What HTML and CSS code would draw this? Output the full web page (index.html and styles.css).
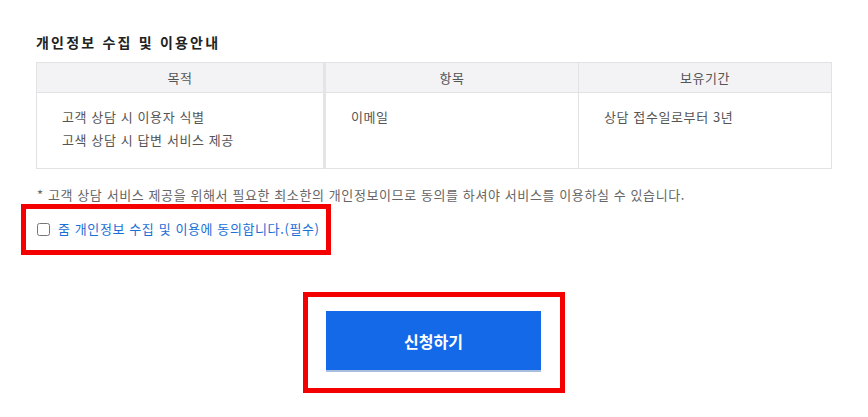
FILE: index.html
```html
<!DOCTYPE html>
<html lang="ko">
<head>
  <meta charset="UTF-8">
  <meta name="viewport" content="width=device-width, initial-scale=1.0">
  <title>개인정보 수집 및 이용안내</title>
  <link rel="stylesheet" href="styles.css">
</head>
<body>

  <div class="privacy">
    <h3 class="privacy-title">개인정보 수집 및 이용안내</h3>

    <!-- 수집 항목 표 -->
    <table class="privacy-table">
      <thead>
        <tr>
          <th class="col-purpose">목적</th>
          <th class="col-item">항목</th>
          <th class="col-period">보유기간</th>
        </tr>
      </thead>
      <tbody>
        <tr>
          <td class="col-purpose">고객 상담 시 이용자 식별<br>고색 상담 시 답변 서비스 제공</td>
          <td class="col-item">이메일</td>
          <td class="col-period">상담 접수일로부터 3년</td>
        </tr>
      </tbody>
    </table>

    <p class="privacy-note">* 고객 상담 서비스 제공을 위해서 필요한 최소한의 개인정보이므로 동의를 하셔야 서비스를 이용하실 수 있습니다.</p>

    <!-- 동의 체크 -->
    <div class="highlight agree-box">
      <label class="agree">
        <input type="checkbox" id="agreePrivacy">
        줌 개인정보 수집 및 이용에 동의합니다.(필수)
      </label>
    </div>

    <!-- 신청 버튼 -->
    <div class="submit-row">
      <div class="highlight submit-box">
        <button type="button" class="submit-btn">신청하기</button>
      </div>
    </div>
  </div>

</body>
</html>
```

FILE: styles.css
```css
body {
  font-family: "Noto Sans CJK KR", "Noto Sans", sans-serif;
  margin: 0;
  padding: 0;
  color: #555;
  background: #fff;
}
.privacy {
  padding: 32px 36px 0 36px;
}
.privacy-title {
  margin: 0;
  font-size: 14px;
  line-height: 20px;
  font-weight: bold;
  letter-spacing: 2.2px;
  color: #222;
}
.privacy-table {
  width: 796px;
  margin-top: 10px;
  border-collapse: collapse;
  font-size: 13px;
  letter-spacing: 0.6px;
}
.privacy-table th,
.privacy-table td {
  border: 1px solid #e2e2e4;
}
.privacy-table th {
  height: 29px;
  padding: 0;
  background-color: #f3f3f5;
  font-weight: normal;
  color: #555;
  text-align: center;
}
.privacy-table td {
  height: 76px;
  padding: 0 25px;
  box-sizing: border-box;
  vertical-align: top;
  padding-top: 12px;
  line-height: 23px;
  text-align: left;
}
.col-purpose {
  width: 286px;
  border-right: 3px solid #e4e4e6 !important;
}
.col-item {
  width: 252px;
}
.privacy-note {
  margin: 17px 0 0 1px;
  font-size: 13px;
  line-height: 18px;
  letter-spacing: 0.6px;
  color: #666;
}
.highlight {
  border: 5px solid #f40000;
  box-sizing: border-box;
}
.agree-box {
  width: 310px;
  height: 51px;
  margin-left: -15px;
  padding: 10px 0 0 11px;
}
.agree {
  display: flex;
  align-items: center;
  gap: 8px;
  font-size: 13px;
  line-height: 20px;
  letter-spacing: 0.6px;
  color: #1a6fd6;
  cursor: pointer;
}
.agree input {
  width: 13px;
  height: 13px;
  margin: 0;
}
.submit-row {
  display: flex;
  justify-content: center;
  margin: 37px 0 0 -36px;
  width: 868px;
}
.submit-box {
  width: 262px;
  height: 101px;
  padding: 14px 0 0 18px;
}
.submit-btn {
  width: 215px;
  height: 61px;
  padding: 0;
  border: none;
  border-bottom: 2px solid #a9bedf;
  background-color: #1469e8;
  color: #fff;
  font-family: inherit;
  font-size: 16px;
  font-weight: bold;
  cursor: pointer;
}
.submit-btn:hover {
  background-color: #0f58c6;
}
```
